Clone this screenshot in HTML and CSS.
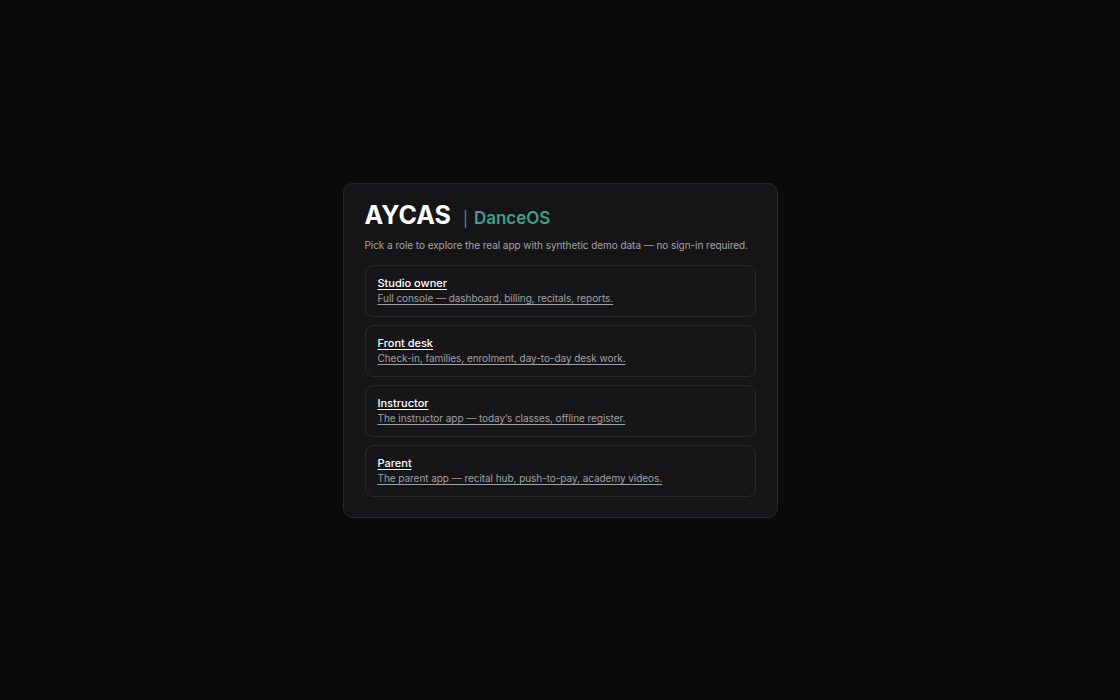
FILE: index.html
```html
<!DOCTYPE html>
<html lang="en">
<head>
<meta charset="utf-8">
<title>AYCAS DanceOS — Demo</title>
<link rel="stylesheet" href="styles.css">
</head>
<body>
<main class="page">
  <section class="card">
    <h1 class="brand"><span class="brand-name">AYCAS</span><span class="brand-sep">|</span><span class="brand-product">DanceOS</span></h1>
    <p class="intro">Pick a role to explore the real app with synthetic demo data — no sign-in required.</p>
    <div class="roles">
      <a class="role" href="#owner">
        <span class="role-title">Studio owner</span>
        <span class="role-desc">Full console — dashboard, billing, recitals, reports.</span>
      </a>
      <a class="role" href="#desk">
        <span class="role-title">Front desk</span>
        <span class="role-desc">Check-in, families, enrolment, day-to-day desk work.</span>
      </a>
      <a class="role" href="#instructor">
        <span class="role-title">Instructor</span>
        <span class="role-desc">The instructor app — today’s classes, offline register.</span>
      </a>
      <a class="role" href="#parent">
        <span class="role-title">Parent</span>
        <span class="role-desc">The parent app — recital hub, push-to-pay, academy videos.</span>
      </a>
    </div>
  </section>
</main>
</body>
</html>
```
FILE: styles.css
```css
* { box-sizing: border-box; }
html, body { margin: 0; padding: 0; }
body {
  background: #0a0a0a;
  font-family: Inter, "Noto Sans", "Liberation Sans", sans-serif;
  color: #f2f2f2;
}
.page {
  min-height: 100vh;
  display: flex;
  align-items: center;
  justify-content: center;
}
.card {
  width: 435px;
  background: #151517;
  border: 1px solid #2a2a2d;
  border-radius: 10px;
  padding: 17px 21px 20px 21px;
}
.brand {
  margin: 0;
  display: flex;
  align-items: baseline;
  line-height: 28px;
}
.brand-name {
  font-size: 25px;
  font-weight: 700;
  color: #ffffff;
  letter-spacing: 0;
}
.brand-sep {
  font-size: 15px;
  font-weight: 400;
  color: #3f9f88;
  margin: 0 6px 0 12px;
}
.brand-product {
  font-size: 17px;
  font-weight: 600;
  color: #3f9f88;
}
.intro {
  margin: 5px 0 12px;
  font-size: 10px;
  line-height: 15px;
  letter-spacing: -0.05px;
  color: #a3a3a6;
  white-space: nowrap;
}
.roles {
  display: flex;
  flex-direction: column;
  gap: 8px;
}
.role {
  display: flex;
  flex-direction: column;
  justify-content: center;
  gap: 1px;
  height: 52px;
  padding: 0 12px;
  border: 1px solid #28282b;
  border-radius: 8px;
  background: #161618;
  text-decoration: none;
}
.role-title {
  font-size: 11px;
  line-height: 14px;
  font-weight: 500;
  color: #ffffff;
  text-decoration: underline;
  text-underline-offset: 2px;
}
.role-desc {
  font-size: 10px;
  line-height: 14px;
  letter-spacing: -0.05px;
  color: #a0a0a4;
  text-decoration: underline;
  text-underline-offset: 2px;
}
```
